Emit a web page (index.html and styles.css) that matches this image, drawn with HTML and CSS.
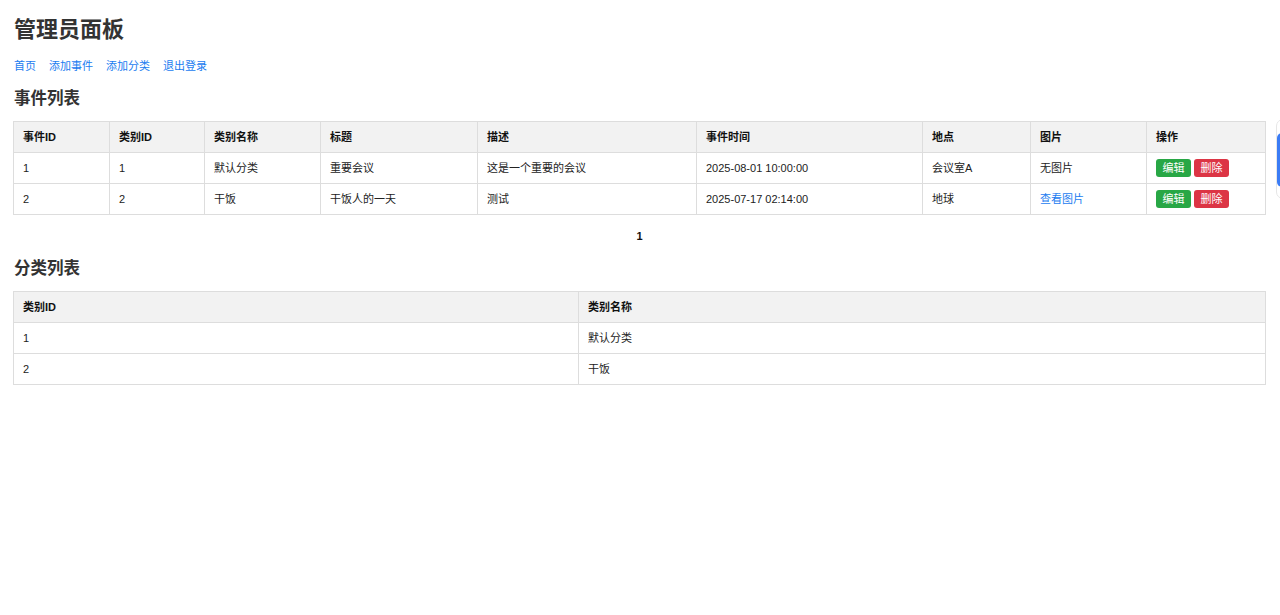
FILE: index.html
```html
<!DOCTYPE html>
<html lang="zh-CN">
<head>
<meta charset="utf-8">
<title>管理员面板</title>
<link rel="stylesheet" href="styles.css">
</head>
<body>
<div class="page">
  <h1 class="title">管理员面板</h1>
  <nav class="nav">
    <a href="#">首页</a>
    <a href="#">添加事件</a>
    <a href="#">添加分类</a>
    <a href="#">退出登录</a>
  </nav>

  <h2 class="section-title">事件列表</h2>
  <table class="grid events">
    <thead>
      <tr>
        <th class="c1">事件ID</th>
        <th class="c2">类别ID</th>
        <th class="c3">类别名称</th>
        <th class="c4">标题</th>
        <th class="c5">描述</th>
        <th class="c6">事件时间</th>
        <th class="c7">地点</th>
        <th class="c8">图片</th>
        <th class="c9">操作</th>
      </tr>
    </thead>
    <tbody>
      <tr>
        <td>1</td>
        <td>1</td>
        <td>默认分类</td>
        <td>重要会议</td>
        <td>这是一个重要的会议</td>
        <td>2025-08-01 10:00:00</td>
        <td>会议室A</td>
        <td>无图片</td>
        <td><a class="btn btn-edit" href="#">编辑</a> <a class="btn btn-del" href="#">删除</a></td>
      </tr>
      <tr>
        <td>2</td>
        <td>2</td>
        <td>干饭</td>
        <td>干饭人的一天</td>
        <td>测试</td>
        <td>2025-07-17 02:14:00</td>
        <td>地球</td>
        <td><a class="link" href="#">查看图片</a></td>
        <td><a class="btn btn-edit" href="#">编辑</a> <a class="btn btn-del" href="#">删除</a></td>
      </tr>
    </tbody>
  </table>

  <div class="pager"><span class="page-num">1</span></div>

  <h2 class="section-title">分类列表</h2>
  <table class="grid cats">
    <thead>
      <tr>
        <th class="k1">类别ID</th>
        <th class="k2">类别名称</th>
      </tr>
    </thead>
    <tbody>
      <tr><td>1</td><td>默认分类</td></tr>
      <tr><td>2</td><td>干饭</td></tr>
    </tbody>
  </table>
</div>
<div class="float-widget"><div class="float-inner"></div></div>
</body>
</html>
```

FILE: styles.css
```css
html, body {
  margin: 0;
  padding: 0;
  background: #fff;
}

body {
  font-family: "Liberation Sans", Arial, "Noto Sans CJK SC", sans-serif;
  font-size: 11px;
  color: #333;
  overflow: hidden;
}

.page {
  padding: 15px 14px 0 13px;
}

.title {
  margin: 0 0 13px 1px;
  font-size: 22px;
  line-height: 30px;
  font-weight: bold;
  color: #333;
}

.nav {
  display: flex;
  gap: 13px;
  margin: 0 0 12px 1px;
  line-height: 16px;
}

.nav a,
.link {
  color: #1a7cf0;
  text-decoration: none;
}

.section-title {
  margin: 0 0 11px 1px;
  font-size: 16.5px;
  line-height: 24px;
  font-weight: bold;
  color: #333;
}

.grid {
  width: 100%;
  border-collapse: collapse;
  table-layout: fixed;
}

.grid th,
.grid td {
  box-sizing: border-box;
  border: 1px solid #ddd;
  padding: 8px 9px;
  line-height: 14px;
  text-align: left;
  vertical-align: middle;
  white-space: nowrap;
}

.grid th {
  background: #f2f2f2;
  font-weight: bold;
  color: #111;
}

.grid td {
  color: #222;
}

.events .c1 { width: 96px; }
.events .c2 { width: 95px; }
.events .c3 { width: 116px; }
.events .c4 { width: 157px; }
.events .c5 { width: 219px; }
.events .c6 { width: 226px; }
.events .c7 { width: 108px; }
.events .c8 { width: 116px; }

.cats .k1 { width: 565px; }

.btn {
  display: inline-block;
  padding: 2px 6.5px;
  margin: -2px 0;
  line-height: 14px;
  border-radius: 3px;
  color: #fff;
  text-decoration: none;
}

.btn-edit { background: #28a745; }
.btn-del { background: #dc3545; }

.pager {
  margin: 13px 0 12px;
  text-align: center;
  line-height: 16px;
}

.page-num {
  font-weight: bold;
  color: #111;
}

.float-widget {
  position: fixed;
  top: 119px;
  right: -20px;
  width: 24px;
  height: 80px;
  box-sizing: border-box;
  border: 1px solid #e6e6e6;
  border-radius: 7px;
  background: #fff;
  padding-top: 13px;
}

.float-inner {
  height: 54px;
  background: #3b7cf5;
  border-radius: 5px 0 0 5px;
}
```
